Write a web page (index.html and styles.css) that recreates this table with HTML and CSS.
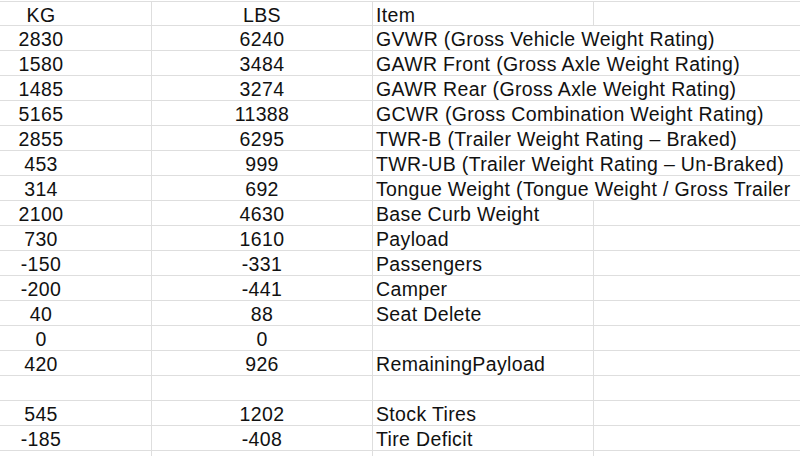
FILE: index.html
```html
<!DOCTYPE html>
<html>
<head>
<meta charset="utf-8">
<link rel="stylesheet" href="styles.css">
</head>
<body>
<div class="sheet">
  <div class="row"><div class="c num">KG</div><div class="c num">LBS</div><div class="c item">Item</div><div class="c"></div></div>
  <div class="row"><div class="c num">2830</div><div class="c num">6240</div><div class="c item span">GVWR (Gross Vehicle Weight Rating)</div></div>
  <div class="row"><div class="c num">1580</div><div class="c num">3484</div><div class="c item span">GAWR Front (Gross Axle Weight Rating)</div></div>
  <div class="row"><div class="c num">1485</div><div class="c num">3274</div><div class="c item span">GAWR Rear (Gross Axle Weight Rating)</div></div>
  <div class="row"><div class="c num">5165</div><div class="c num">11388</div><div class="c item span">GCWR (Gross Combination Weight Rating)</div></div>
  <div class="row"><div class="c num">2855</div><div class="c num">6295</div><div class="c item span">TWR-B (Trailer Weight Rating – Braked)</div></div>
  <div class="row"><div class="c num">453</div><div class="c num">999</div><div class="c item span">TWR-UB (Trailer Weight Rating – Un-Braked)</div></div>
  <div class="row"><div class="c num">314</div><div class="c num">692</div><div class="c item span">Tongue Weight (Tongue Weight / Gross Trailer</div></div>
  <div class="row"><div class="c num">2100</div><div class="c num">4630</div><div class="c item">Base Curb Weight</div><div class="c"></div></div>
  <div class="row"><div class="c num">730</div><div class="c num">1610</div><div class="c item">Payload</div><div class="c"></div></div>
  <div class="row"><div class="c num">-150</div><div class="c num">-331</div><div class="c item">Passengers</div><div class="c"></div></div>
  <div class="row"><div class="c num">-200</div><div class="c num">-441</div><div class="c item">Camper</div><div class="c"></div></div>
  <div class="row"><div class="c num">40</div><div class="c num">88</div><div class="c item">Seat Delete</div><div class="c"></div></div>
  <div class="row"><div class="c num">0</div><div class="c num">0</div><div class="c item"></div><div class="c"></div></div>
  <div class="row"><div class="c num">420</div><div class="c num">926</div><div class="c item">RemainingPayload</div><div class="c"></div></div>
  <div class="row"><div class="c num"></div><div class="c num"></div><div class="c item"></div><div class="c"></div></div>
  <div class="row"><div class="c num">545</div><div class="c num">1202</div><div class="c item">Stock Tires</div><div class="c"></div></div>
  <div class="row"><div class="c num">-185</div><div class="c num">-408</div><div class="c item">Tire Deficit</div><div class="c"></div></div>
  <div class="row"><div class="c num"></div><div class="c num"></div><div class="c item"></div><div class="c"></div></div>
</div>
</body>
</html>
```
FILE: styles.css
```css
html, body {
  margin: 0;
  padding: 0;
  background: #ffffff;
  overflow: hidden;
}
body {
  width: 800px;
  height: 456px;
}
.sheet {
  margin-left: -69px;
  padding-top: 1px;
  font-family: "Liberation Sans", Arial, sans-serif;
  font-size: 19.5px;
  letter-spacing: 0.35px;
  color: #111111;
}
.row {
  display: grid;
  grid-template-columns: 221px 221px 221px 300px;
  height: 25px;
  box-sizing: border-box;
  border-bottom: 1px solid #dedede;
}
.row:first-child {
  border-top: 1px solid #dedede;
}
.c {
  box-sizing: border-box;
  border-right: 1px solid #dedede;
  line-height: 20px;
  padding-top: 3px;
  white-space: nowrap;
  overflow: hidden;
}
.num {
  text-align: center;
}
.item {
  padding-left: 3px;
}
.span {
  grid-column: span 2;
}
```
